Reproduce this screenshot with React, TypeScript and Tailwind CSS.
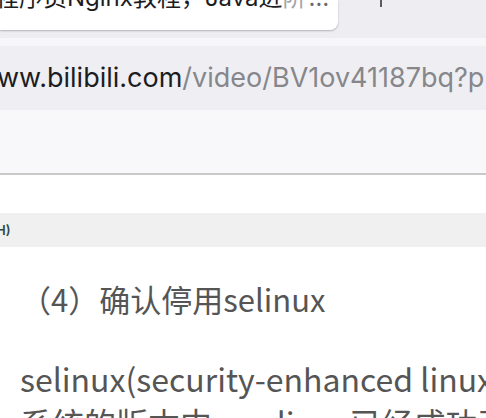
export default function App() {
  return (
    <div className="h-[418px] w-[486px] overflow-hidden bg-white font-['Inter','Noto_Sans_CJK_SC',sans-serif]">
      {/* tab strip */}
      <div className="relative h-[38px] bg-[#eeedf2]">
        <div className="h-[30px] w-[338px] overflow-hidden rounded-br-[8px] bg-white shadow-[0_1px_2px_rgba(0,0,0,0.25)]">
          <div className="-ml-[5px] -mt-[22px] whitespace-nowrap text-[24px] leading-[40px] text-[#1d1d1f]">
            程序员Nginx教程，Java进
            <span className="text-[#a5a5aa]">阶</span>
            <span className="ml-[2px] text-[#6b6b70]">…</span>
          </div>
        </div>
        <div className="absolute left-[380px] top-0 h-[7px] w-[2px] bg-[#5a5a60]" />
      </div>
      <div className="h-[8px] bg-[#f7f7f9]" />
      {/* address bar */}
      <div className="flex h-[64px] items-center overflow-hidden bg-[#efeff3]">
        <div className="-ml-[3px] whitespace-nowrap text-[27px] text-[#1d1d1f]">
          ww.bilibili.com<span className="text-[#86868b]">/video/BV1ov41187bq?p=2</span>
        </div>
      </div>
      <div className="h-[63px] bg-[#f8f8fa]" />
      <div className="h-[2px] bg-[#c9c9c9]" />
      {/* page content */}
      <div className="h-[38px] bg-white" />
      <div className="flex h-[34px] items-center bg-[#f0f0f0]">
        <span className="-ml-[4px] mt-[2px] text-[13px] font-semibold text-[#2f4a4a]">H)</span>
      </div>
      <div className="pt-[32px] font-['Noto_Sans_CJK_SC','Noto_Sans',sans-serif] text-[#555555]">
        <div className="whitespace-nowrap pl-[20px] text-[31px] leading-[40px]">（4）确认停用selinux</div>
        <div className="mt-[38px] whitespace-nowrap pl-[20px] text-[32px] leading-[42px]">selinux(security-enhanced linux)</div>
        <div className="mt-[2px] whitespace-nowrap pl-[20px] text-[32px] leading-[42px]">系统的版本中，selinux已经成功开启</div>
      </div>
    </div>
  );
}
